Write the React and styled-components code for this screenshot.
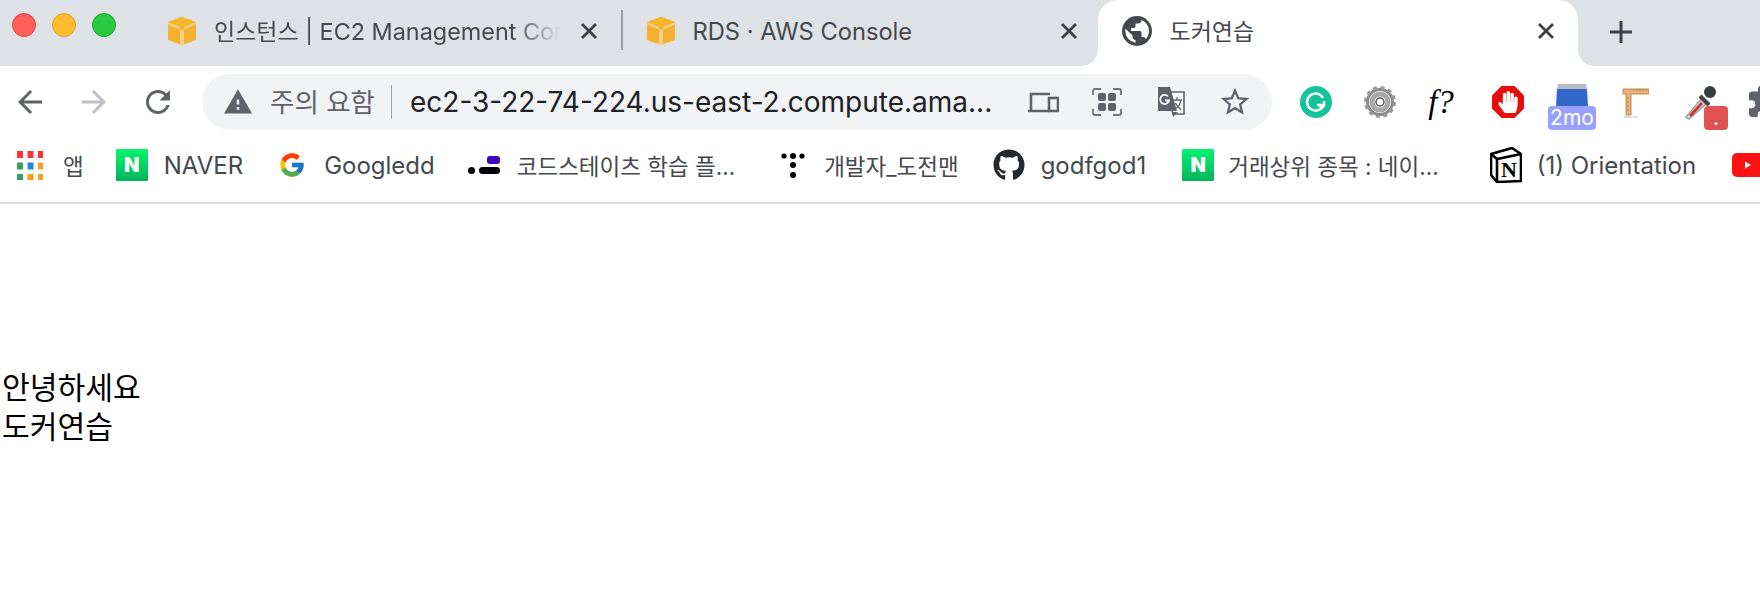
import React from "react";
import styled, { createGlobalStyle } from "styled-components";
import { FaGithub, FaHandPaper } from "react-icons/fa";
import { FcGoogle } from "react-icons/fc";

const Global = createGlobalStyle`
  html, body { margin: 0; padding: 0; background: #fff; overflow: hidden; }
  body { font-family: Inter, "Noto Sans CJK KR", sans-serif; }
`;

const Browser = styled.header`
  width: 1760px;
  border-bottom: 2px solid #dadce0;
`;
const TabStrip = styled.div`
  height: 66px;
  background: #dee1e6;
  display: flex;
  align-items: stretch;
`;
const Lights = styled.div`
  width: 148px;
  flex: none;
  padding: 13px 0 0 12px;
  box-sizing: border-box;
  display: flex;
  gap: 16px;
`;
const Light = styled.span`
  width: 24px;
  height: 24px;
  border-radius: 50%;
  background: ${(p) => p.$c};
  border: 1px solid ${(p) => p.$b};
  box-sizing: border-box;
`;
const Tab = styled.div`
  position: relative;
  width: ${(p) => p.$w}px;
  flex: none;
  box-sizing: border-box;
  padding: 0 ${(p) => p.$pr}px 4px ${(p) => p.$pl}px;
  display: flex;
  align-items: center;
  gap: 18px;
  background: ${(p) => (p.$active ? "#fff" : "transparent")};
  border-radius: 20px 20px 0 0;
  ${(p) =>
    p.$active &&
    `
    &::before, &::after {
      content: "";
      position: absolute;
      bottom: 0;
      width: 16px;
      height: 16px;
      background: radial-gradient(circle at var(--cx) 0, #dee1e6 15.5px, #fff 16px);
    }
    &::before { left: -16px; --cx: 0; }
    &::after { right: -16px; --cx: 100%; }
  `}
`;
const Divider = styled.span`
  width: 1.5px;
  height: 40px;
  margin-bottom: 6px;
  align-self: center;
  flex: none;
  background: #9aa0a6;
`;
const TabTitle = styled.span`
  flex: 1;
  min-width: 0;
  white-space: nowrap;
  overflow: hidden;
  color: #45484c;
  font-size: ${(p) => p.$size || 23.7}px;
  line-height: 32px;
  padding-top: 2px;
  ${(p) =>
    p.$fade &&
    `-webkit-mask-image: linear-gradient(to right, #000 86%, transparent 100%);
     mask-image: linear-gradient(to right, #000 86%, transparent 100%);`}
`;
const Hangul = styled.span`
  font-size: 23px;
`;
const TabClose = styled.svg`
  width: 20px;
  height: 20px;
  flex: none;
`;
const NewTab = styled.svg`
  width: 28px;
  height: 28px;
  margin: 18px 0 0 29px;
  flex: none;
`;
const Toolbar = styled.div`
  height: 70px;
  display: flex;
  align-items: center;
  background: #fff;
  padding: 2px 0 0 12px;
  box-sizing: border-box;
`;
const NavButton = styled.svg`
  width: 36px;
  height: 36px;
  flex: none;
  margin-right: ${(p) => p.$mr}px;
  fill: ${(p) => p.$c};
`;
const Omnibox = styled.div`
  width: 1070px;
  height: 56px;
  flex: none;
  box-sizing: border-box;
  background: #f1f3f4;
  border-radius: 28px;
  display: flex;
  align-items: center;
  padding-left: 22px;
  white-space: nowrap;
`;
const Warn = styled.svg`
  width: 28px;
  height: 28px;
  fill: #5f6368;
  flex: none;
`;
const Security = styled.span`
  margin-left: 18px;
  font-size: 26.5px;
  color: #5f6368;
  padding-right: 16px;
  border-right: 1.5px solid #9aa0a6;
  line-height: 34px;
`;
const Url = styled.span`
  margin-left: 18px;
  width: 591px;
  font-size: 28px;
  color: #202124;
  overflow: hidden;
`;
const OmniIcon = styled.svg`
  width: ${(p) => p.$s || 32}px;
  height: ${(p) => p.$s || 32}px;
  flex: none;
  margin-left: ${(p) => p.$ml}px;
`;
const Extensions = styled.div`
  display: flex;
  align-items: center;
  margin-left: 24px;
  gap: 24px;
`;
const Ext = styled.div`
  position: relative;
  width: 40px;
  height: 40px;
  flex: none;
  display: flex;
  align-items: center;
  justify-content: center;
`;
const FormulaIcon = styled.span`
  font-family: "Liberation Serif", serif;
  font-style: italic;
  font-size: 33px;
  color: #000;
  white-space: nowrap;
  padding-right: 6px;
`;
const Badge = styled.span`
  position: absolute;
  left: ${(p) => p.$l}px;
  top: 24px;
  height: 24px;
  width: ${(p) => p.$w}px;
  background: ${(p) => p.$c};
  color: #fff;
  font-size: 21px;
  line-height: 24px;
  border-radius: 4px;
  text-align: center;
  white-space: nowrap;
`;
const StopHand = styled.span`
  position: absolute;
  color: #fff;
  font-size: 22px;
  display: flex;
`;
const Bookmarks = styled.div`
  height: 66px;
  display: flex;
  align-items: center;
  padding: 0 0 8px 17px;
  box-sizing: border-box;
  background: #fff;
  overflow: hidden;
  white-space: nowrap;
`;
const Bookmark = styled.div`
  display: flex;
  align-items: center;
  gap: ${(p) => p.$gap}px;
  flex: none;
  margin-right: ${(p) => p.$mr}px;
  font-size: ${(p) => (p.$latin ? 24 : 22.5)}px;
  color: #45484c;
`;
const NaverIcon = styled.span`
  width: 32px;
  height: 32px;
  flex: none;
  border-radius: 1px;
  background: linear-gradient(#03f56f, #03b35d);
  color: #fff;
  font: 900 20px/32px Inter, sans-serif;
  text-align: center;
`;
const Page = styled.main`
  padding: 165px 0 0 2px;
  font-size: 30.2px;
  line-height: 39px;
  color: #000;
`;

const Cube = () => (
  <svg width="28" height="28" viewBox="0 0 28 28" style={{ flex: "none" }}>
    <path d="M0 5 14 0l14 5v18l-14 5-14-5z" fill="#f4b02f" />
    <path d="M0 5 14 0l14 5-14 5z" fill="#f6b62c" />
    <path d="M0 5l12 5v18h4V10L28 5v2.5L16 12.5h-4L0 7.5z" fill="#f8cf8a" />
  </svg>
);
const Close = () => (
  <TabClose viewBox="0 0 20 20">
    <path d="M3 3l14 14M17 3 3 17" stroke="#3c4043" strokeWidth="2.8" />
  </TabClose>
);
const Globe = () => (
  <svg width="30" height="32" viewBox="2 2 20 20" fill="#45484c" style={{ flex: "none" }}>
    <circle cx="12" cy="12" r="10" />
    <path
      fill="#fff"
      d="M4.3 10.5 9 15v1c0 1.1.9 2 2 2v1.9a8 8 0 0 1-6.8-8zM17.9 17.4c-.3-.8-1-1.4-1.9-1.4h-1v-3c0-.6-.4-1-1-1H8v-2h2c.6 0 1-.4 1-1V7h2c1.1 0 2-.9 2-2v-.4a8 8 0 0 1 2.9 12.8z"
    />
  </svg>
);
const Naver = () => <NaverIcon>N</NaverIcon>;

const AppsGrid = () => {
  const cols = ["#f33", "#f33", "#f33", "#34a060", "#1e88e5", "#f4a21c", "#34a060", "#f4a21c", "#f4a21c"];
  return (
    <svg width="26" height="30" viewBox="0 0 26 30" style={{ flex: "none" }}>
      {cols.map((c, i) => (
        <rect key={i} x={(i % 3) * 10.5} y={Math.floor(i / 3) * 11.5 + 1} width="6" height="7" fill={c} />
      ))}
    </svg>
  );
};
const CodeStates = () => (
  <svg width="32" height="24" viewBox="0 0 32 24" style={{ flex: "none" }}>
    <circle cx="3.5" cy="17.5" r="3.5" fill="#000" />
    <rect x="11" y="14" width="21" height="7" rx="3.5" fill="#000" />
    <rect x="19" y="3" width="13" height="8" rx="3" fill="#3a06c0" />
  </svg>
);
const Dots = () => (
  <svg width="24" height="30" viewBox="0 0 24 30" style={{ flex: "none" }}>
    {[[3, 6, 2.6], [12, 6, 3], [21, 6, 2.6], [12, 15, 3], [12, 25, 3]].map(([x, y, r], i) => (
      <circle key={i} cx={x} cy={y} r={r} fill="#000" />
    ))}
  </svg>
);
const Notion = () => (
  <svg width="32" height="36" viewBox="0 0 32 36" style={{ flex: "none" }}>
    <path d="M1 7 22 1l9 6v27l-24 1-6-7z" fill="#fff" stroke="#000" strokeWidth="2.6" strokeLinejoin="round" />
    <path d="M1 7l6 5 24-5M7 12v23" fill="none" stroke="#000" strokeWidth="2.6" />
    <text x="19" y="30" textAnchor="middle" fontFamily="Liberation Serif" fontWeight="700" fontSize="22" fill="#000">N</text>
  </svg>
);
const YouTube = () => (
  <svg width="32" height="24" viewBox="0 0 32 24" style={{ flex: "none" }}>
    <rect width="32" height="24" rx="5" fill="#f11" />
    <path d="M13 8.5v7l6-3.5z" fill="#fff" />
  </svg>
);
const RulerTicks = () => {
  const xs = [13, 16, 19, 22, 25];
  return xs.map((x) => <path key={x} d={`M${x} 3v2`} stroke="#a8713a" strokeWidth="0.8" />);
};

export default function App() {
  return (
    <>
      <Global />
      <Browser>
        <TabStrip>
          <Lights>
            <Light $c="#ff5f57" $b="#e0443e" />
            <Light $c="#ffbd2e" $b="#dea123" />
            <Light $c="#27c93f" $b="#1aab29" />
          </Lights>
          <Tab $w={473} $pr={22} $pl={20}>
            <Cube />
            <TabTitle $fade $size={23.4}>
              <Hangul>인스턴스</Hangul> | EC2 Management Console
            </TabTitle>
            <Close />
          </Tab>
          <Divider />
          <Tab $w={475} $pr={19} $pl={24}>
            <Cube />
            <TabTitle>RDS · AWS Console</TabTitle>
            <Close />
          </Tab>
          <Tab $w={480} $pr={22} $pl={24} $active>
            <Globe />
            <TabTitle $size={23}>도커연습</TabTitle>
            <Close />
          </Tab>
          <NewTab viewBox="0 0 28 28">
            <path d="M14 3v22M3 14h22" stroke="#3c4043" strokeWidth="3" />
          </NewTab>
        </TabStrip>
        <Toolbar>
          <NavButton viewBox="0 0 24 24" $c="#5f6368" $mr={28}>
            <path d="M20 11H7.83l5.59-5.59L12 4l-8 8 8 8 1.41-1.41L7.83 13H20v-2z" />
          </NavButton>
          <NavButton viewBox="0 0 24 24" $c="#bdc1c6" $mr={28}>
            <path d="M12 4l-1.41 1.41L16.17 11H4v2h12.17l-5.58 5.59L12 20l8-8z" />
          </NavButton>
          <NavButton viewBox="0 0 24 24" $c="#5f6368" $mr={26}>
            <path d="M17.65 6.35C16.2 4.9 14.21 4 12 4c-4.42 0-7.99 3.58-7.99 8s3.57 8 7.99 8c3.73 0 6.84-2.55 7.73-6h-2.08c-.82 2.33-3.04 4-5.65 4-3.31 0-6-2.69-6-6s2.69-6 6-6c1.66 0 3.14.69 4.22 1.78L13 11h7V4l-2.35 2.35z" />
          </NavButton>
          <Omnibox>
            <Warn viewBox="1 2 22 20">
              <path d="M1 21h22L12 2 1 21zm12-3h-2v-2h2v2zm0-4h-2v-4h2v4z" />
            </Warn>
            <Security>주의 요함</Security>
            <Url>ec2-3-22-74-224.us-east-2.compute.ama...</Url>
            <OmniIcon viewBox="0 0 32 32" $ml={26}>
              <path d="M4 24V8h19M1 25h21" fill="none" stroke="#5f6368" strokeWidth="2.6" />
              <rect x="22" y="12" width="9" height="13" fill="none" stroke="#5f6368" strokeWidth="2.6" />
            </OmniIcon>
            <OmniIcon viewBox="0 0 32 32" $ml={32}>
              <path d="M2 9V5a2 2 0 0 1 2-2h6M22 3h6a2 2 0 0 1 2 2v4M2 23v4a2 2 0 0 0 2 2h6M30 23v4a2 2 0 0 1-2 2h-6" fill="none" stroke="#6f7377" strokeWidth="1.8" />
              <rect x="7" y="7" width="8" height="8" rx="2" fill="#5f6368" />
              <rect x="17" y="7" width="8" height="8" rx="2" fill="#5f6368" />
              <rect x="7" y="17" width="8" height="8" rx="2" fill="#5f6368" />
              <rect x="17" y="17" width="8" height="8" rx="2" fill="#5f6368" />
            </OmniIcon>
            <OmniIcon viewBox="0 0 32 32" $ml={32}>
              <path d="M12 6h17v22H18z" fill="#fff" stroke="#5f6368" strokeWidth="1.6" />
              <path d="M3 1h12l7 24H3z" fill="#5f6368" />
              <path d="M17 26l1 5 5-5z" fill="#5f6368" />
              <path d="M13 10.5a4.5 4.5 0 1 0 1 4h-4" fill="none" stroke="#fff" strokeWidth="1.8" />
              <path d="M18 14h9M22 11v3M26 14c-1 6-5 9-8 10M20 17l6 7" fill="none" stroke="#5f6368" strokeWidth="1.3" />
            </OmniIcon>
            <OmniIcon viewBox="0 0 24 24" $s={34} $ml={31}>
              <path
                fill="#5f6368"
                d="M22 9.24l-7.19-.62L12 2 9.19 8.63 2 9.24l5.46 4.73L5.82 21 12 17.27 18.18 21l-1.63-7.03L22 9.24zM12 15.4l-3.76 2.27 1-4.28-3.32-2.88 4.38-.38L12 6.1l1.71 4.04 4.38.38-3.32 2.88 1 4.28L12 15.4z"
              />
            </OmniIcon>
          </Omnibox>
          <Extensions>
            <Ext>
              <svg width="32" height="32" viewBox="0 0 32 32">
                <circle cx="16" cy="16" r="16" fill="#15c39a" />
                <path d="M23 12a8.5 8.5 0 1 0 .5 7H17" fill="none" stroke="#fff" strokeWidth="2.4" />
                <path d="M19 20h5v-5" fill="none" stroke="#fff" strokeWidth="2.4" />
              </svg>
            </Ext>
            <Ext>
              <svg width="32" height="32" viewBox="0 0 32 32">
                <circle cx="16" cy="16" r="12.5" fill="none" stroke="#8c8c8c" strokeWidth="3" />
                <circle cx="16" cy="16" r="14.5" fill="none" stroke="#9a9a9a" strokeWidth="3" strokeDasharray="4 3.6" />
                <circle cx="16" cy="16" r="8" fill="none" stroke="#a8a8a8" strokeWidth="5" />
                <circle cx="16" cy="16" r="4" fill="#fff" stroke="#555" strokeWidth="1.5" />
              </svg>
            </Ext>
            <Ext>
              <FormulaIcon>f?</FormulaIcon>
            </Ext>
            <Ext>
              <svg width="32" height="32" viewBox="0 0 32 32">
                <path d="M9.5 0h13L32 9.5v13L22.5 32h-13L0 22.5v-13z" fill="#e80c0c" />
              </svg>
              <StopHand>
                <FaHandPaper />
              </StopHand>
            </Ext>
            <Ext>
              <svg width="32" height="24" viewBox="0 0 32 24" style={{ marginTop: -12 }}>
                <path d="M2 0h28l1 5H1z" fill="#b8bcc2" />
                <path d="M1 5h30l1 17H0z" fill="#3367cc" />
              </svg>
              <Badge $c="#9aa0ff" $l={-4} $w={48}>2mo</Badge>
            </Ext>
            <Ext>
              <svg width="28" height="32" viewBox="0 0 28 32" style={{ marginLeft: -3 }}>
                <path d="M2 3h26v5H10v21H5V8H2z" fill="#e8b27c" stroke="#c4884a" strokeWidth="1" />
                <RulerTicks />
                <path d="M6 12h2M6 16h2M6 20h2M6 24h2" stroke="#a8713a" strokeWidth="0.8" />
                <path d="M3 31h14" stroke="#ddd" strokeWidth="2" />
              </svg>
            </Ext>
            <Ext>
              <svg width="36" height="36" viewBox="0 0 36 36" style={{ marginLeft: 2 }}>
                <path d="M3 33 18 15l5 5L6 35z" fill="#d9dbdd" stroke="#9a9da1" strokeWidth="1.4" />
                <path d="M6 31 18 18l2 2L8 33z" fill="#c9343a" />
                <path d="M17 12l9 9" stroke="#444" strokeWidth="4" />
                <circle cx="27" cy="8" r="6" fill="#3a3d40" />
              </svg>
              <Badge $c="#e05252" $l={24} $w={24}>.</Badge>
            </Ext>
            <Ext>
              <svg width="36" height="36" viewBox="0 0 24 24" fill="#5f6368">
                <path d="M20.5 11H19V7c0-1.1-.9-2-2-2h-4V3.5a2.5 2.5 0 0 0-5 0V5H4c-1.1 0-2 .9-2 2v3.8h1.5a2.7 2.7 0 0 1 0 5.4H2V20c0 1.1.9 2 2 2h3.8v-1.5a2.7 2.7 0 0 1 5.4 0V22H17c1.1 0 2-.9 2-2v-4h1.5a2.5 2.5 0 0 0 0-5z" />
              </svg>
            </Ext>
          </Extensions>
        </Toolbar>
        <Bookmarks>
          <Bookmark $mr={32} $gap={20}>
            <AppsGrid />
            <span>앱</span>
          </Bookmark>
          <Bookmark $mr={35} $gap={16} $latin>
            <Naver />
            <span>NAVER</span>
          </Bookmark>
          <Bookmark $mr={33} $gap={18} $latin>
            <FcGoogle size={28} />
            <span>Googledd</span>
          </Bookmark>
          <Bookmark $mr={46} $gap={17}>
            <CodeStates />
            <span>코드스테이츠 학습 플...</span>
          </Bookmark>
          <Bookmark $mr={34} $gap={19}>
            <Dots />
            <span>개발자_도전맨</span>
          </Bookmark>
          <Bookmark $mr={36} $gap={16} $latin>
            <FaGithub size={32} color="#24292e" />
            <span>godfgod1</span>
          </Bookmark>
          <Bookmark $mr={51} $gap={14}>
            <Naver />
            <span>거래상위 종목 : 네이...</span>
          </Bookmark>
          <Bookmark $mr={36} $gap={15} $latin>
            <Notion />
            <span>(1) Orientation</span>
          </Bookmark>
          <Bookmark $mr={0} $gap={0}>
            <YouTube />
          </Bookmark>
        </Bookmarks>
      </Browser>
      <Page>
        안녕하세요
        <br />
        도커연습
      </Page>
    </>
  );
}
